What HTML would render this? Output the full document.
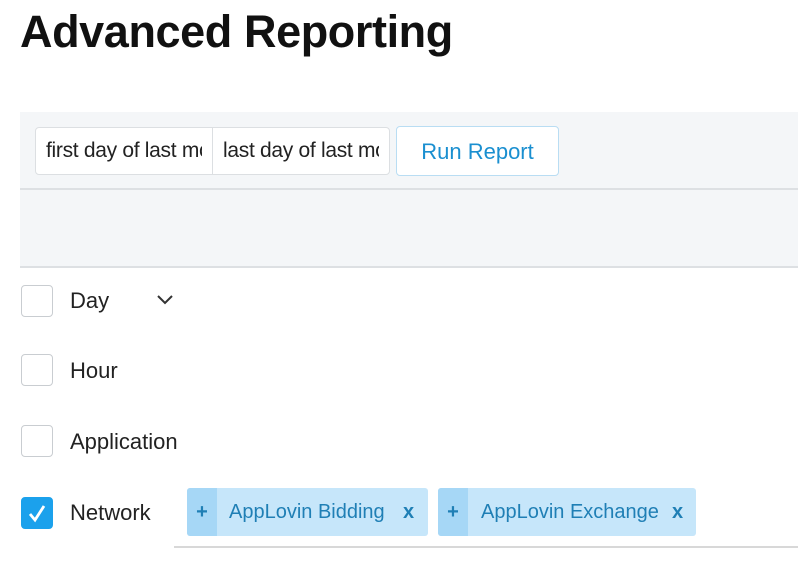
<!DOCTYPE html>
<html><head><style>
body{margin:0;width:798px;height:566px;background:#fff;font-family:"Liberation Sans",sans-serif;position:relative;overflow:hidden}
.a{position:absolute}
h1{position:absolute;left:20px;top:6px;margin:0;font-size:45px;font-weight:bold;color:#111;letter-spacing:-0.4px}
.panel{left:20px;top:112px;width:778px;height:154px;background:#f4f6f8;border-bottom:2px solid #dde0e3}
.sep{left:20px;top:188px;width:778px;height:2px;background:#dde0e3}
.in{top:127px;height:48px;background:#fff;border:1px solid #dcdfe2;font-size:21px;color:#222;line-height:46px;box-sizing:border-box}
.in span{position:absolute;left:10px;top:0;width:156px;overflow:hidden;white-space:nowrap;letter-spacing:-0.3px}
.btn{left:396px;top:126px;width:163px;height:50px;background:#fff;border:1px solid #b9ddf3;border-radius:4px;box-sizing:border-box;color:#1a8fd0;font-size:22px;text-align:center;line-height:50px}
.cb{left:21px;width:32px;height:32px;border:1.5px solid #c9cdd1;border-radius:4px;box-sizing:border-box;background:#fff}
.lb{left:70px;font-size:22px;color:#222}
.tag{top:488px;height:48px;background:#c6e6fa;border-radius:3px;color:#1f7fb5;font-size:20px;line-height:48px}
.tag .p{position:absolute;left:0;top:0;width:30px;height:48px;background:#a6d7f6;text-align:center;font-weight:bold;border-radius:3px 0 0 3px}
</style></head><body>
<h1>Advanced Reporting</h1>
<div class="a panel"></div>
<div class="a sep"></div>
<div class="a in" style="left:35px;width:178px;border-radius:4px 0 0 4px"><span>first day of last month</span></div>
<div class="a in" style="left:212px;width:178px;border-radius:0 4px 4px 0"><span>last day of last month</span></div>
<div class="a btn">Run Report</div>

<div class="a cb" style="top:285px"></div><div class="a lb" style="top:288px">Day</div>
<svg class="a" style="left:156px;top:294px" width="18" height="12"><path d="M2 2 L9 9 L16 2" stroke="#333" stroke-width="2" fill="none"/></svg>
<div class="a cb" style="top:354px"></div><div class="a lb" style="top:358px">Hour</div>
<div class="a cb" style="top:425px"></div><div class="a lb" style="top:429px">Application</div>
<div class="a cb" style="top:497px;background:#1ba1ec;border-color:#1ba1ec"></div>
<svg class="a" style="left:21px;top:497px" width="32" height="32"><path d="M9 17 L14 23 L23 9" stroke="#fff" stroke-width="2.8" fill="none"/></svg>
<div class="a lb" style="top:500px">Network</div>

<div class="a tag" style="left:187px;width:241px"><span class="p">+</span><span style="position:absolute;left:42px">AppLovin Bidding</span><span style="position:absolute;left:216px;font-weight:bold">x</span></div>
<div class="a tag" style="left:438px;width:258px"><span class="p">+</span><span style="position:absolute;left:43px">AppLovin Exchange</span><span style="position:absolute;left:234px;font-weight:bold">x</span></div>
<div class="a" style="left:174px;top:546px;width:624px;height:2px;background:#d8d8d8"></div>
</body></html>
